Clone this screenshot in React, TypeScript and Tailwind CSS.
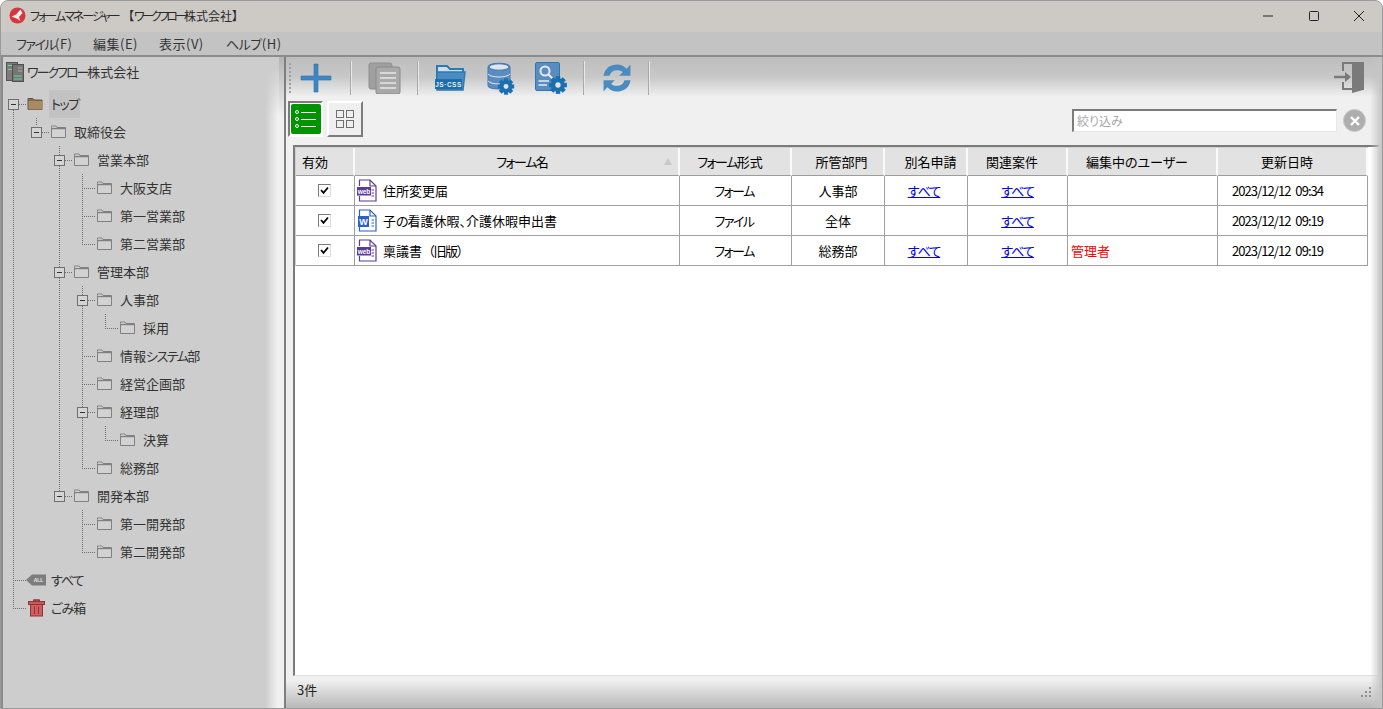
import React from "react";

function Txt({ t, wide = "tracking-[-1.5px]" }: { t: string; wide?: string }) {
  const parts = t.split(/([ぁ-んァ-ヿ]+)/);
  return (
    <>
      {parts.map((p, i) => {
        if (!p) return null;
        if (/^[ァ-ヿ]+$/.test(p)) return <span key={i} className={wide}>{p}</span>;
        if (/^[ぁ-ん]+$/.test(p)) return <span key={i} className="tracking-[-1px]">{p}</span>;
        return <span key={i}>{p}</span>;
      })}
    </>
  );
}

type Node = { label: string; depth: number; kind?: "root" | "folder" | "all" | "trash"; box?: boolean };
const nodes: Node[] = [
  { label: "トップ", depth: 0, kind: "root", box: true },
  { label: "取締役会", depth: 1, box: true },
  { label: "営業本部", depth: 2, box: true },
  { label: "大阪支店", depth: 3 },
  { label: "第一営業部", depth: 3 },
  { label: "第二営業部", depth: 3 },
  { label: "管理本部", depth: 2, box: true },
  { label: "人事部", depth: 3, box: true },
  { label: "採用", depth: 4 },
  { label: "情報システム部", depth: 3 },
  { label: "経営企画部", depth: 3 },
  { label: "経理部", depth: 3, box: true },
  { label: "決算", depth: 4 },
  { label: "総務部", depth: 3 },
  { label: "開発本部", depth: 2, box: true },
  { label: "第一開発部", depth: 3 },
  { label: "第二開発部", depth: 3 },
  { label: "すべて", depth: 0, kind: "all" },
  { label: "ごみ箱", depth: 0, kind: "trash" },
];

const depthPad = ["pl-[26px]", "pl-[49px]", "pl-[72px]", "pl-[95px]", "pl-[118px]"];

function Folder({ open }: { open?: boolean }) {
  return open ? (
    <svg width="17" height="14" viewBox="0 0 17 14">
      <path d="M1 3 V1.5 H6 L7.5 3 H15 V12.5 H1 Z" fill="#8a6f4e" stroke="#5f5548" />
      <rect x="1.5" y="4" width="14" height="8.5" fill="#a98a63" />
    </svg>
  ) : (
    <svg width="17" height="14" viewBox="0 0 17 14">
      <path d="M1.5 2.5 V1 H6 L7 2.5 H15.5 V12.5 H1.5 Z" fill="#dedede" stroke="#808080" />
      <rect x="2" y="4" width="13" height="8" fill="#d2d2d2" />
      <path d="M1.5 3.5 H15.5" stroke="#808080" strokeWidth="1.4" />
    </svg>
  );
}

function TreeLines() {
  const v: [number, number, number][] = [
    [13, 110, 608], [36, 118, 126], [59, 146, 496], [82, 174, 244], [82, 286, 468],
    [105, 314, 328], [105, 426, 440], [82, 510, 552],
  ];
  const h: [number, number, number][] = [
    [19, 26, 104], [42, 49, 132], [65, 72, 160], [82, 95, 188], [82, 95, 216], [82, 95, 244],
    [65, 72, 272], [88, 95, 300], [105, 118, 328], [82, 95, 356], [82, 95, 384], [88, 95, 412],
    [105, 118, 440], [82, 95, 468], [65, 72, 496], [82, 95, 524], [82, 95, 552], [13, 26, 580], [13, 26, 608],
  ];
  return (
    <svg className="pointer-events-none" width="130" height="620" viewBox="0 0 130 620">
      <g stroke="#6e6e6e" strokeDasharray="1 1" fill="none">
        {v.map(([x, a, b], i) => <line key={i} x1={x + 0.5} x2={x + 0.5} y1={a} y2={b} />)}
        {h.map(([a, b, y], i) => <line key={i} x1={a} x2={b} y1={y + 0.5} y2={y + 0.5} />)}
      </g>
      {[[8, 99], [31, 127], [54, 155], [54, 267], [77, 295], [77, 407], [54, 491]].map(([x, y], i) => (
        <g key={i}>
          <rect x={x + 0.5} y={y + 0.5} width="10" height="10" fill="#d4d4d4" stroke="#707070" />
          <line x1={x + 3} x2={x + 8} y1={y + 5.5} y2={y + 5.5} stroke="#333" />
        </g>
      ))}
    </svg>
  );
}

function TreeRow({ n }: { n: Node }) {
  return (
    <div className={`h-7 flex items-center ${depthPad[n.depth]}`}>
      <div className="w-[19px] h-5 flex items-center shrink-0">
        {n.kind === "root" ? <Folder open /> : n.kind === "all" ? (
          <svg width="20" height="14" viewBox="0 0 20 14" className="-ml-[1px] shrink-0">
            <path d="M0 7 L6 1.5 H20 V12.5 H6 Z" fill="#7d7d7d" />
            <text x="12.5" y="9" textAnchor="middle" fontSize="5" fontWeight="700" fill="#e8e8e8" fontFamily="Liberation Sans">ALL</text>
          </svg>
        ) : n.kind === "trash" ? (
          <svg width="17" height="18" viewBox="0 0 17 18" className="ml-[1px] shrink-0">
            <path d="M5.5 2.5 V0.8 H11.5 V2.5" fill="#b34a4a" stroke="#8f3535" />
            <rect x="0.5" y="2.5" width="16" height="3" fill="#c95a5a" stroke="#8f3535" />
            <rect x="2.5" y="5.5" width="12" height="11.5" fill="#cf5f5f" stroke="#8f3535" />
            <path d="M6.5 7.5 V15 M10.5 7.5 V15" stroke="#8f3535" />
          </svg>
        ) : <Folder />}
      </div>
      {n.kind === "root" ? (
        <span className="ml-[3px] bg-[#c2c2c2] h-[28px] w-[31px] flex items-center pl-[2px] text-[13px] text-[#333] whitespace-nowrap"><span><Txt t={n.label} /></span></span>
      ) : (
        <span className="ml-[5px] text-[13px] text-[#333] whitespace-nowrap"><Txt t={n.label} /></span>
      )}
    </div>
  );
}

function Gear({ x, y, r, c = "#1a6fb0" }: { x: number; y: number; r: number; c?: string }) {
  const teeth = [0, 45, 90, 135];
  return (
    <g>
      {teeth.map((a) => (
        <rect key={a} x={x - r * 0.3} y={y - r * 1.2} width={r * 0.6} height={r * 2.4} fill={c} transform={`rotate(${a} ${x} ${y})`} />
      ))}
      <circle cx={x} cy={y} r={r * 0.92} fill={c} />
      <circle cx={x} cy={y} r={r * 0.36} fill="#e3e3e3" />
    </g>
  );
}

const Sep = () => <div className="w-[2px] h-[34px] mx-[16px] bg-[#a9a9a9] border-r border-[#e8e8e8] shrink-0" />;

function Toolbar() {
  return (
    <div className="h-[42px] flex items-center pl-[3px] shrink-0">
      <div className="w-[2px] h-[30px] border-l-2 border-dotted border-[#a0a0a0] mr-[8px] shrink-0" />
      <svg width="34" height="32" viewBox="0 0 34 32" className="mr-[1px] shrink-0">
        <path d="M15 2 H19 V14 H32 V18 H19 V30 H15 V18 H2 V14 H15 Z" fill="#3f86c4" stroke="#2f6ea6" strokeWidth="0.6" strokeLinejoin="round" />
      </svg>
      <Sep />
      <svg width="33" height="32" viewBox="0 0 33 32" className="shrink-0">
        <rect x="1" y="1" width="23" height="26" rx="2" fill="#a0a0a0" stroke="#8e8e8e" />
        <rect x="8" y="5" width="24" height="27" rx="2" fill="#a9a9a9" stroke="#8a8a8a" />
        <path d="M12 11 H28 M12 16 H28 M12 21 H28 M12 26 H28" stroke="#d8d8d8" strokeWidth="2" />
      </svg>
      <Sep />
      <svg width="32" height="28" viewBox="0 0 32 28" className="shrink-0">
        <path d="M2 15 V2 H12 L15 5 H28 V10" fill="#cfdde9" stroke="#2b7ab5" strokeWidth="2" />
        <path d="M2 8 H30 L28 26 H2 Z" fill="#4a8cc2" stroke="#2b7ab5" strokeWidth="1.5" />
        <rect x="0" y="15" width="27" height="10" fill="#1f6da8" />
        <text x="13.5" y="22.6" textAnchor="middle" fontSize="6.4" fontWeight="700" letterSpacing="0.6" fill="#e6eef5" fontFamily="Liberation Sans">JS·CSS</text>
      </svg>
      <div className="w-[20px] shrink-0" />
      <svg width="28" height="33" viewBox="0 0 28 33" className="shrink-0">
        <path d="M1 5 C1 0 23 0 23 5 V24 C23 28 1 28 1 24 Z" fill="#5a8cc0" stroke="#3f79b0" />
        <ellipse cx="12" cy="5" rx="10" ry="3.2" fill="#dfe5ea" stroke="#3f79b0" />
        <path d="M1 12 C4 16 20 16 23 12 M1 19 C4 23 20 23 23 19" fill="none" stroke="#e8e8e8" />
        <Gear x={19} y={24.5} r={6.8} />
      </svg>
      <div className="w-[20px] shrink-0" />
      <svg width="32" height="32" viewBox="0 0 32 32" className="shrink-0">
        <rect x="0.5" y="0.5" width="24" height="28" rx="1.5" fill="#5a8cc0" stroke="#2b78b3" />
        <circle cx="10" cy="9" r="4.5" fill="none" stroke="#e8e8e8" strokeWidth="2" />
        <path d="M13.5 12.5 L19 18" stroke="#e8e8e8" strokeWidth="2" />
        <path d="M3.5 19 H14 M3.5 23 H12" stroke="#e8e8e8" strokeWidth="1.5" />
        <Gear x={23} y={23} r={7.4} />
      </svg>
      <Sep />
      <svg width="28" height="28" viewBox="2 2 26 26" className="ml-[2px] mr-[1px] shrink-0">
        <path d="M2.5 13 C3.5 6 9 2.5 15 2.5 C19 2.5 22 4.5 24 6.5 L27.5 2.5 V13 H17 L20.5 9.5 C19 8.3 17 7.8 15 7.8 C11.5 7.8 9 9.5 8 13 Z" fill="#4a8cc2" />
        <path d="M27.5 17 C26.5 24 21 27.5 15 27.5 C11 27.5 8 25.5 6 23.5 L2.5 27.5 V17 H13 L9.5 20.5 C11 21.7 13 22.2 15 22.2 C18.5 22.2 21 20.5 22 17 Z" fill="#4a8cc2" />
      </svg>
      <Sep />
      <div className="flex-1" />
      <svg width="30" height="32" viewBox="0 0 30 32" className="mr-[18px] shrink-0">
        <path d="M9 9 V1 H29 V27 H9 V20" fill="none" stroke="#7a7a7a" strokeWidth="2" />
        <path d="M18 1 H29 V28 L18 31 Z" fill="#7a7a7a" />
        <path d="M0 15 H11" stroke="#7a7a7a" strokeWidth="2.5" />
        <path d="M11 10 L17 15 L11 20 Z" fill="#7a7a7a" />
      </svg>
    </div>
  );
}

function Doc({ word }: { word?: boolean }) {
  const c = word ? "#2b5fc9" : "#5b3a9b";
  return (
    <svg width="20" height="23" viewBox="0 0 20 23" className="shrink-0">
      <path d="M2.5 7 V1 H13 L19 7 V22 H2.5 V17" fill="#fff" stroke={c} strokeWidth="1.2" />
      <path d="M13 1 V7 H19" fill="none" stroke={c} strokeWidth="1.2" />
      <path d="M14.5 11 H17 M14.5 14 H17 M14.5 17 H17" stroke={c} strokeWidth="1.2" />
      {word ? (
        <>
          <rect x="1" y="7" width="11" height="11" fill={c} />
          <text x="6.5" y="15.8" textAnchor="middle" fontSize="9" fontWeight="700" fill="#fff" fontFamily="Liberation Sans">W</text>
        </>
      ) : (
        <>
          <rect x="0" y="8" width="14" height="8.5" fill={c} />
          <text x="7" y="14.8" textAnchor="middle" fontSize="6.5" fontWeight="700" fill="#fff" fontFamily="Liberation Sans">web</text>
        </>
      )}
    </svg>
  );
}

const gridCols = "grid w-max grid-cols-[59px_325px_112px_93px_83px_100px_150px_150px]";

const headers = [
  { t: "有効", c: "justify-start pl-[6px]" },
  { t: "フォーム名", c: "justify-center pl-[12px]" },
  { t: "フォーム形式", c: "justify-center pr-[10px]" },
  { t: "所管部門", c: "justify-center pl-[8px]" },
  { t: "別名申請", c: "justify-center pl-[10px]" },
  { t: "関連案件", c: "justify-center pr-[10px]" },
  { t: "編集中のユーザー", c: "justify-center pr-[10px]" },
  { t: "更新日時", c: "justify-center pr-[10px]" },
];

const rows = [
  { name: "住所変更届", paren: "", word: false, type: "フォーム", dept: "人事部", alias: true, user: "", date: "2023/12/12 09:34" },
  { name: "子の看護休暇、介護休暇申出書", paren: "", word: true, type: "ファイル", dept: "全体", alias: false, user: "", date: "2023/12/12 09:19" },
  { name: "稟議書", paren: "（旧版）", word: false, type: "フォーム", dept: "総務部", alias: true, user: "管理者", date: "2023/12/12 09:19" },
];

function Check() {
  return (
    <div className="w-[13px] h-[13px] bg-white border border-t-[#7a7a7a] border-l-[#7a7a7a] border-r-[#dcdcdc] border-b-[#dcdcdc] flex items-center justify-center">
      <svg width="9" height="9" viewBox="0 0 9 9"><path d="M1 4 L3.5 6.8 L8 1.5" fill="none" stroke="#000" strokeWidth="1.8" /></svg>
    </div>
  );
}

const Cell = ({ children, className = "" }: { children?: React.ReactNode; className?: string }) => (
  <div className={`h-[30px] border-r border-b border-[#a0a0a0] flex items-center justify-center text-[13px] text-black whitespace-nowrap ${className}`}>{children}</div>
);
const Link = () => <span className="text-[#0000ee] underline tracking-[-1px]">すべて</span>;

function Table() {
  return (
    <div className="flex-1 min-h-0 mr-[3px] ml-[7px] border-l-[2px] border-t-[2px] border-[#7c7c7c] bg-white border-r border-b border-r-[#e0e0e0] border-b-[#e0e0e0]">
      <div className={`${gridCols} border-l border-t border-[#d0d0d0] bg-[#e2e2e2]`}>
        {headers.map((h, i) => (
          <div key={h.t} className={`relative h-[28px] flex items-center ${h.c} text-[13px] text-black border-r-2 border-b border-r-[#fafafa] border-b-[#9c9c9c]`}>
            <span><Txt t={h.t} /></span>
            {i === 1 && <span className="absolute right-[6px] top-[10px] w-0 h-0 border-x-[4px] border-x-transparent border-b-[7px] border-b-[#c8c8c8]" />}
          </div>
        ))}
      </div>
      {rows.map((r) => (
        <div key={r.name} className={`${gridCols} border-l border-[#d0d0d0]`}>
          <Cell className="pr-[2px]"><Check /></Cell>
          <Cell className="justify-start pl-[2px] gap-[6px]">
            <Doc word={r.word} />
            <span><Txt t={r.name} />{r.paren && <span className="[font-feature-settings:normal] tracking-[-1.5px]">{r.paren}</span>}</span>
          </Cell>
          <Cell className="pr-[3px]"><span><Txt t={r.type} /></span></Cell>
          <Cell>{r.dept}</Cell>
          <Cell className="pr-[4px]">{r.alias && <Link />}</Cell>
          <Cell><Link /></Cell>
          <Cell className="justify-start pl-[3px]"><span className="text-[#ff0000]">{r.user}</span></Cell>
          <Cell className="justify-start pl-[14px]"><span className="tracking-[-0.95px] [word-spacing:3px]">{r.date}</span></Cell>
        </div>
      ))}
    </div>
  );
}

export default function App() {
  return (
    <div className="w-[1383px] h-[709px] overflow-hidden flex flex-col bg-[#c8c8c8] border border-[#9a9a9a] rounded-t-[8px] [font-family:'Noto_Sans_CJK_JP','Liberation_Sans',sans-serif] [font-feature-settings:'palt']">
      <div className="h-[31px] shrink-0 flex items-center bg-[#cdcac5] pl-[8px] pb-[2px]">
        <svg width="17" height="17" viewBox="0 0 17 17" className="shrink-0">
          <circle cx="8.5" cy="8.5" r="8" fill="#d8343c" />
          <path d="M2.5 9.5 L7 7.5 L11.5 2.5 L13.5 6 L10 10 L11.5 14 L7.5 11.5 Z" fill="#f4e9e6" />
        </svg>
        <span className="ml-[4px] w-[88px] shrink-0 text-[12px] text-[#2a2a2a] whitespace-nowrap"><Txt t="フォームマネージャー" wide="tracking-[-2px]" /></span>
        <span className="ml-[10px] text-[12px] text-[#2a2a2a] whitespace-nowrap"><Txt t="【ワークフロー株式会社】" wide="tracking-[-2.8px]" /></span>
        <div className="flex-1" />
        <svg width="12" height="2" viewBox="0 0 12 2" className="mr-[34px]"><path d="M1 1 H11" stroke="#222" /></svg>
        <svg width="12" height="12" viewBox="0 0 12 12" className="mr-[33px]"><rect x="1.5" y="1.5" width="9" height="9" rx="1" fill="none" stroke="#222" /></svg>
        <svg width="12" height="12" viewBox="0 0 12 12" className="mr-[17px]"><path d="M1 1 L11 11 M11 1 L1 11" stroke="#222" /></svg>
      </div>
      <div className="h-[25px] shrink-0 flex items-center bg-[#c3c3c3] border-b-2 border-[#8c8c8c] text-[13px] text-[#333] pl-[15px] gap-[20px] tracking-[0.5px]">
        <span className="w-[57px] whitespace-nowrap"><Txt t="ファイル(F)" /></span>
        <span className="w-[46px] whitespace-nowrap">編集(E)</span>
        <span className="w-[47px] whitespace-nowrap">表示(V)</span>
        <span className="w-[54px] whitespace-nowrap"><Txt t="ヘルプ(H)" wide="tracking-[-0.5px]" /></span>
      </div>
      <div className="flex-1 min-h-0 flex">
        <div className="relative w-[278px] shrink-0 border-l-2 border-[#8a8a8a] bg-[#cdcdcd] flex flex-col">
          <div className="absolute right-0 top-0 bottom-0 w-[14px] bg-[linear-gradient(to_right,transparent,#f4f4f4)] [mask-image:linear-gradient(to_bottom,transparent_10px,black_60px)]" />
          <div className="h-[30px] flex items-center pl-[3px] shrink-0">
            <svg width="18" height="20" viewBox="0 0 18 20" className="shrink-0">
              <rect x="0.5" y="0.5" width="11" height="18" fill="#7c7c7c" stroke="#555" />
              <rect x="6.5" y="2.5" width="11" height="17" fill="#757575" stroke="#4f4f4f" />
              <path d="M2 3.5 H6 M2 7.5 H6 M8 14 H16 M8 17 H16" stroke="#6fd39a" />
              <path d="M12 6 H16 M12 9 H16" stroke="#b0b0b0" />
            </svg>
            <span className="ml-[3px] text-[13px] text-[#333] whitespace-nowrap"><Txt t="ワークフロー株式会社" wide="tracking-[-2px]" /></span>
          </div>
          <div className="relative flex-1 -ml-[2px] pt-[3px]">
            <div className="absolute left-[-1px] top-[-87px]"><TreeLines /></div>
            <div className="relative">
              {nodes.map((n) => <TreeRow key={n.label} n={n} />)}
            </div>
          </div>
        </div>
        <div className="w-[5px] shrink-0 bg-[linear-gradient(to_bottom,#b4b4b4,#f0f0f0_60px)]" />
        <div className="relative flex-1 min-w-0 flex flex-col border-l-2 border-[#7f7f7f] bg-[linear-gradient(to_bottom,#bdbdbd_0px,#c8c8c8_20px,#f0f0f0_40px,#f0f0f0_calc(100%-28px),#b8b8b8_100%)]">
          <Toolbar />
          <div className="h-[46px] shrink-0 flex items-start pl-[2px] pr-[16px] pt-[2px]">
            <div className="w-[35px] h-[36px] border-2 border-t-[#7c7c7c] border-l-[#7c7c7c] border-r-[#fff] border-b-[#fff] bg-white flex items-center justify-center">
              <div className="w-[30px] h-[30px] rounded-[2px] bg-[#009400] flex flex-col justify-center gap-[3px] pl-[4px] pr-[5px]">
                {[0, 1, 2].map((i) => (
                  <div key={i} className="flex items-center gap-[2px]">
                    <span className="w-[4px] h-[4px] rounded-full border border-white" />
                    <span className="h-px flex-1 bg-white" />
                  </div>
                ))}
              </div>
            </div>
            <div className="ml-[4px] w-[36px] h-[36px] bg-[#efefef] border-2 border-t-[#fff] border-l-[#fff] border-r-[#7c7c7c] border-b-[#7c7c7c] flex items-center justify-center">
              <svg width="20" height="20" viewBox="0 0 20 20"><g fill="none" stroke="#707070"><rect x="1.5" y="1.5" width="7" height="7" /><rect x="11.5" y="1.5" width="7" height="7" /><rect x="1.5" y="11.5" width="7" height="7" /><rect x="11.5" y="11.5" width="7" height="7" /></g></svg>
            </div>
            <div className="flex-1" />
            <div className="mt-[8px] w-[265px] h-[23px] bg-white border border-t-2 border-l-2 border-t-[#7c7c7c] border-l-[#7c7c7c] border-r-[#e8e8e8] border-b-[#e8e8e8] flex items-center pl-[3px] text-[12px] text-[#a8a8a8]">絞り込み</div>
            <div className="mt-[8px] ml-[6px] w-[23px] h-[23px] rounded-full bg-[#aeaeae] border border-[#c8c8c8] flex items-center justify-center shrink-0">
              <svg width="12" height="12" viewBox="0 0 12 12"><path d="M2 2 L10 10 M10 2 L2 10" stroke="#fff" strokeWidth="2.4" /></svg>
            </div>
          </div>
          <Table />
          <div className="h-[32px] shrink-0 flex items-center justify-between pl-[11px] pr-[11px] pb-[4px] text-[13px] text-[#222]">
            <span>3件</span>
            <svg width="10" height="10" viewBox="0 0 10 10" className="mt-[4px]">
              <g fill="#909090"><rect x="8" y="0" width="2" height="2" /><rect x="4" y="4" width="2" height="2" /><rect x="8" y="4" width="2" height="2" /><rect x="0" y="8" width="2" height="2" /><rect x="4" y="8" width="2" height="2" /><rect x="8" y="8" width="2" height="2" /></g>
            </svg>
          </div>
          <div className="absolute right-0 top-0 bottom-0 w-[12px] bg-[linear-gradient(to_right,transparent,#c4c4c4)] pointer-events-none" />
        </div>
      </div>
    </div>
  );
}
